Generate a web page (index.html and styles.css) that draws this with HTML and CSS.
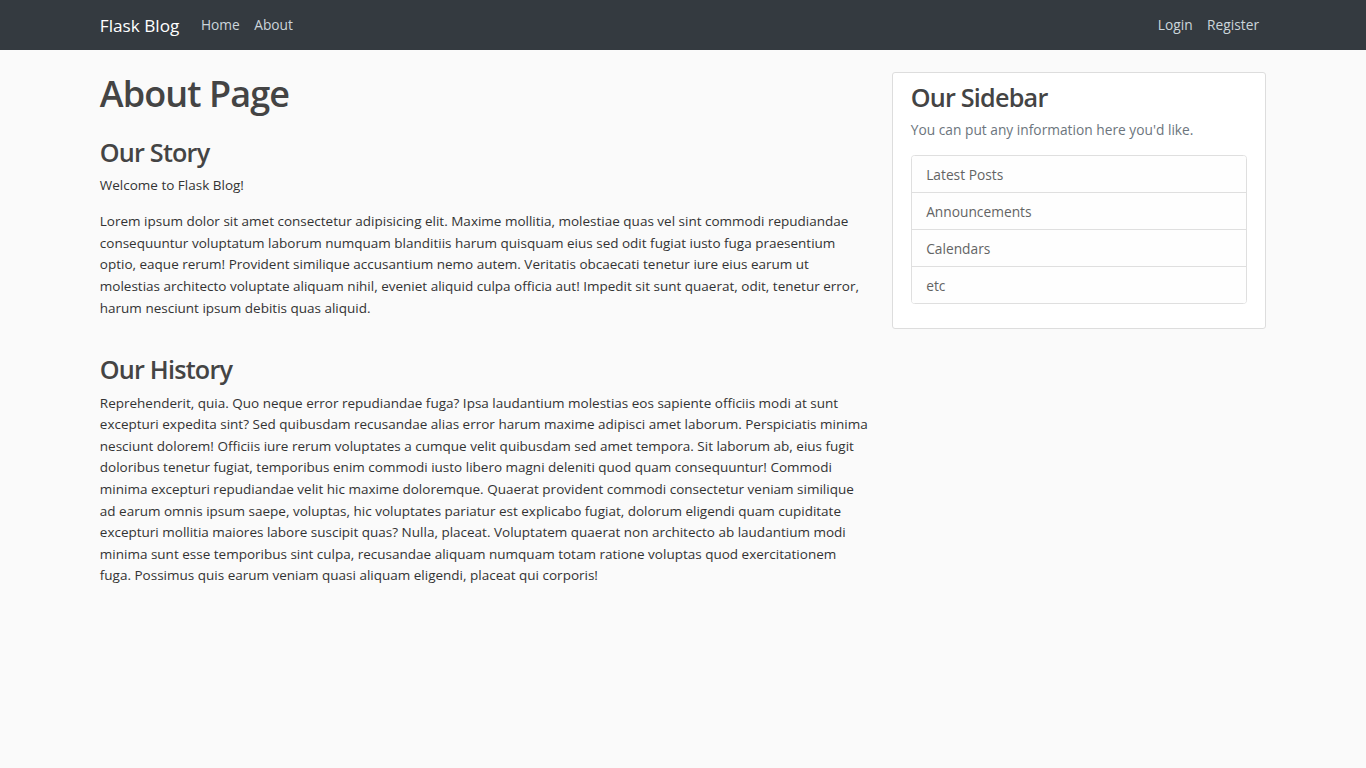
FILE: index.html
```html
<!DOCTYPE html>
<html lang="en">
<head>
<meta charset="utf-8">
<title>Flask Blog - About</title>
<link rel="stylesheet" href="styles.css">
</head>
<body>
<header class="site-header">
  <nav class="navbar">
    <div class="container nav-inner">
      <a class="brand" href="#">Flask Blog</a>
      <div class="nav-left">
        <a class="nav-link" href="#">Home</a>
        <a class="nav-link" href="#">About</a>
      </div>
      <div class="nav-right">
        <a class="nav-link" href="#">Login</a>
        <a class="nav-link" href="#">Register</a>
      </div>
    </div>
  </nav>
</header>
<main class="container main">
  <div class="col-main">
    <h1 class="page-title">About Page</h1>
    <section class="story">
      <h3 class="section-title">Our Story</h3>
      <p>Welcome to Flask Blog!</p>
      <p>Lorem ipsum dolor sit amet consectetur adipisicing elit. Maxime mollitia, molestiae quas vel sint commodi repudiandae consequuntur voluptatum laborum numquam blanditiis harum quisquam eius sed odit fugiat iusto fuga praesentium optio, eaque rerum! Provident similique accusantium nemo autem. Veritatis obcaecati tenetur iure eius earum ut molestias architecto voluptate aliquam nihil, eveniet aliquid culpa officia aut! Impedit sit sunt quaerat, odit, tenetur error, harum nesciunt ipsum debitis quas aliquid.</p>
    </section>
    <section class="history">
      <h3 class="section-title">Our History</h3>
      <p>Reprehenderit, quia. Quo neque error repudiandae fuga? Ipsa laudantium molestias eos sapiente officiis modi at sunt excepturi expedita sint? Sed quibusdam recusandae alias error harum maxime adipisci amet laborum. Perspiciatis minima nesciunt dolorem! Officiis iure rerum voluptates a cumque velit quibusdam sed amet tempora. Sit laborum ab, eius fugit doloribus tenetur fugiat, temporibus enim commodi iusto libero magni deleniti quod quam consequuntur! Commodi minima excepturi repudiandae velit hic maxime doloremque. Quaerat provident commodi consectetur veniam similique ad earum omnis ipsum saepe, voluptas, hic voluptates pariatur est explicabo fugiat, dolorum eligendi quam cupiditate excepturi mollitia maiores labore suscipit quas? Nulla, placeat. Voluptatem quaerat non architecto ab laudantium modi minima sunt esse temporibus sint culpa, recusandae aliquam numquam totam ratione voluptas quod exercitationem fuga. Possimus quis earum veniam quasi aliquam eligendi, placeat qui corporis!</p>
    </section>
  </div>
  <aside class="col-side">
    <div class="content-section">
      <h3 class="side-title">Our Sidebar</h3>
      <p class="text-muted">You can put any information here you'd like.</p>
      <ul class="list-group">
        <li class="list-group-item">Latest Posts</li>
        <li class="list-group-item">Announcements</li>
        <li class="list-group-item">Calendars</li>
        <li class="list-group-item">etc</li>
      </ul>
    </div>
  </aside>
</main>
</body>
</html>
```
FILE: styles.css
```css
* { box-sizing: border-box; }

html, body {
  margin: 0;
  padding: 0;
}

body {
  background: #fafafa;
  color: #333333;
  font-family: "Open Sans", "Noto Sans", "Liberation Sans", sans-serif;
  font-size: 13.5px;
  line-height: 21.6px;
}

h1, h3 {
  color: #444444;
  font-weight: 600;
  margin: 0;
}

p { margin: 0 0 14.4px; }

.col-main p {
  padding-top: 1px;
  margin-bottom: 13.4px;
}

.container {
  width: 1188px;
  margin: 0 auto;
  padding: 0 10.8px;
}

/* navbar */
.navbar {
  background: #343a40;
  height: 50px;
}

.nav-inner {
  display: flex;
  align-items: center;
  height: 50px;
}

.brand {
  color: #ffffff;
  font-size: 17.2px;
  line-height: 27px;
  text-decoration: none;
  margin-right: 14.4px;
}

.nav-left, .nav-right {
  display: flex;
}

.nav-right { margin-left: auto; }

.nav-link {
  color: #cbd5db;
  text-decoration: none;
  padding: 7.2px;
  font-size: 13.75px;
  line-height: 21.6px;
}

/* main layout */
.main {
  display: flex;
  gap: 21.6px;
  padding-top: 22px;
}

.col-main {
  width: 770.4px;
  flex: none;
}

.col-side {
  flex: 1;
}

.page-title {
  font-size: 36px;
  line-height: 43.2px;
  letter-spacing: -0.9px;
  margin-bottom: 21.6px;
}

.section-title {
  font-size: 25.2px;
  line-height: 30.24px;
  letter-spacing: -0.8px;
  margin-bottom: 7.2px;
}

.history { padding-top: 21.6px; }

/* sidebar */
.content-section {
  background: #ffffff;
  border: 1px solid #dddddd;
  border-radius: 3px;
  padding: 9px 18px;
}

.side-title {
  font-size: 25.2px;
  line-height: 30.24px;
  letter-spacing: -0.8px;
  margin-bottom: 7.2px;
}

.text-muted {
  color: #6c757d;
  font-size: 13.75px;
}

.list-group {
  list-style: none;
  margin: 0 0 14.4px;
  padding: 0;
  border: 1px solid #dfdfdf;
  border-radius: 3.6px;
  overflow: hidden;
}

.list-group-item {
  color: #636464;
  background: #fefefe;
  padding: 7.2px 14.4px;
  border-top: 1px solid #dfdfdf;
  font-size: 13.75px;
}

.list-group-item:first-child { border-top: 0; }
```
